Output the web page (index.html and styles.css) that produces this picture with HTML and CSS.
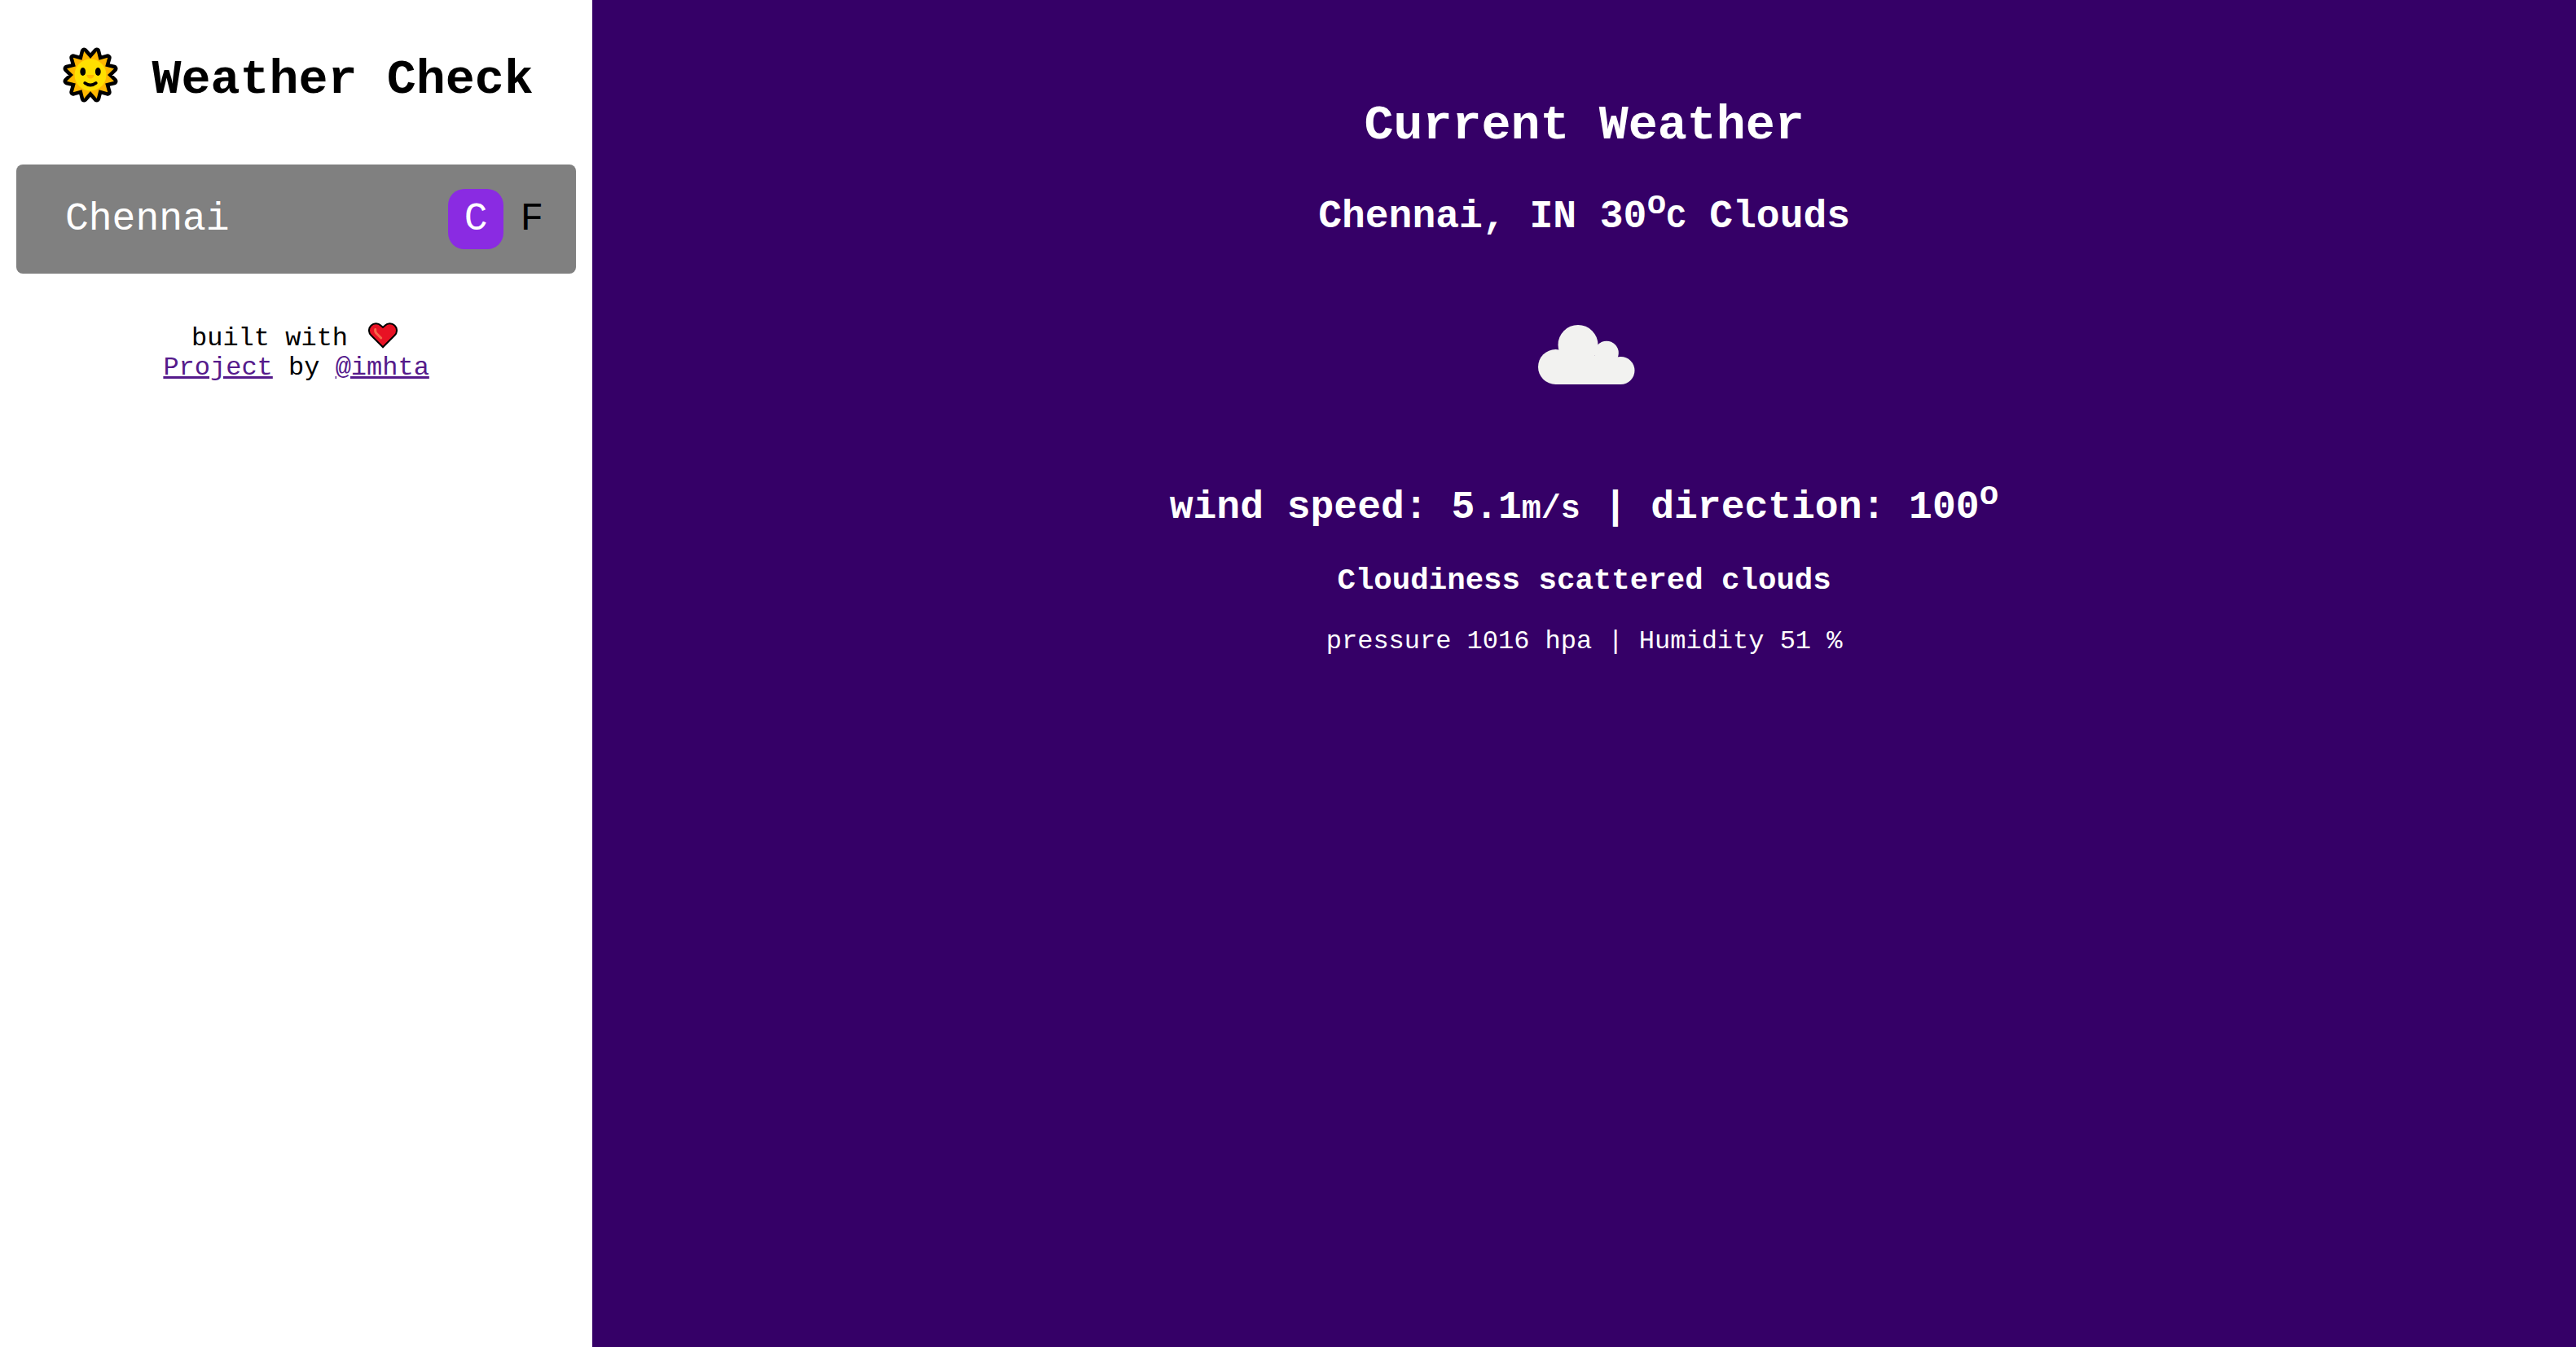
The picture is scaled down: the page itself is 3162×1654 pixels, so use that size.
FILE: index.html
```html
<!DOCTYPE html>
<html lang="en">
<head>
<meta charset="utf-8">
<title>Weather Check</title>
<link rel="stylesheet" href="styles.css">
</head>
<body>
<div class="app">
  <aside class="sidebar">
    <h1 class="brand">
      <svg class="sun" viewBox="0 0 72 72" aria-hidden="true">
        <path class="sun-rays" d="M38 16 L45.800 7 L48.500 17.800 L59.200 14.800 L56.200 25.500 L67 28.200 L59 36 L67 43.800 L56.200 46.500 L59.200 57.200 L48.500 54.200 L45.800 65 L38 56 L30.200 65 L27.500 54.200 L16.800 57.200 L19.800 46.500 L9 43.800 L17 36 L9 28.200 L19.800 25.500 L16.800 14.800 L27.500 17.800 L30.200 7 Z"/>
        <circle cx="38" cy="36" r="19.500" fill="#ffe000"/>
        <ellipse cx="28.700" cy="32" rx="3.400" ry="5"/>
        <ellipse cx="47.300" cy="32" rx="3.400" ry="5"/>
        <path d="M33.300 36h9.400q-1 4.500-4.700 4.500t-4.700-4.500Z" fill="#ffb700"/>
        <path class="smile" d="M31.300 46Q38 51 44.700 46"/>
      </svg>
      Weather Check
    </h1>
    <form class="search">
      <input class="city" type="text" value="Chennai" aria-label="City">
      <button class="unit unit-active" type="button">C</button>
      <button class="unit" type="button">F</button>
    </form>
    <footer class="credits">
      <div>built with
        <svg class="heart" viewBox="0 0 36 32" role="img" aria-label="love">
          <path class="heart-shape" d="M18 30.300 L3.500 15.800 A8.500 8.500 0 0 1 3.500 3.700 A8.500 8.500 0 0 1 15.500 3.700 L18 6 L20.500 3.700 A8.500 8.500 0 0 1 32.500 3.700 A8.500 8.500 0 0 1 32.500 15.800 Z"/>
          <path class="heart-shine" d="M8.700 8.500 Q8.200 11.500 10.200 13.500 L15.700 19"/>
        </svg>
      </div>
      <div><a href="#project">Project</a> by <a href="#imhta">@imhta</a></div>
    </footer>
  </aside>
  <main class="weather">
    <h1 class="title">Current Weather</h1>
    <h2 class="place">Chennai, IN 30<sup>o</sup><small>C</small> Clouds</h2>
    <svg class="cloud" viewBox="0 0 124 78" role="img" aria-label="Clouds">
      <circle cx="26.500" cy="53.500" r="21.500"/>
      <circle cx="54" cy="26.500" r="24.500"/>
      <circle cx="89" cy="36.500" r="14.800"/>
      <circle cx="106.500" cy="58" r="17"/>
      <path d="M26 40H100L107 75H26Z"/>
    </svg>
    <h2 class="wind">wind speed: 5.1<small>m/s</small> | direction: 100<sup>o</sup></h2>
    <h3 class="cloudiness">Cloudiness scattered clouds</h3>
    <p class="details">pressure 1016 hpa | Humidity 51 %</p>
  </main>
</div>
</body>
</html>
```
FILE: styles.css
```css
* {
  box-sizing: border-box;
}

body {
  margin: 0;
  font-family: "Courier New", "Liberation Mono", monospace;
  font-size: 32px;
  line-height: 36px;
  color: #000;
  background: #fff;
}

.app {
  display: grid;
  grid-template-columns: minmax(0, 23fr) minmax(0, 77fr);
  min-height: 100vh;
}

.sidebar {
  padding: 56px 20px;
}

.brand {
  display: flex;
  align-items: flex-start;
  justify-content: center;
  gap: 42px;
  margin: 0 0 62px;
  font-size: 60px;
  line-height: 84px;
  white-space: nowrap;
}

.sun {
  flex: none;
  width: 72px;
  height: 72px;
}

.sun-rays {
  fill: #ffb700;
  stroke: #000;
  stroke-width: 9;
  stroke-linejoin: round;
  paint-order: stroke;
}

.smile {
  fill: none;
  stroke: #000;
  stroke-width: 4;
  stroke-linecap: round;
}

.search {
  display: flex;
  align-items: center;
  padding: 30px 20px;
  border-radius: 8px;
  background: #808080;
}

.city,
.unit {
  border: 0;
  background: none;
  font: inherit;
  font-size: 48px;
  line-height: 54px;
}

.city {
  flex: 1;
  min-width: 0;
  padding: 10px 40px;
  color: #fff;
}

.unit {
  padding: 10px 20px;
  border-radius: 20px;
  color: #000;
}

.unit-active {
  background: #8a2be2;
  color: #fff;
}

.credits {
  margin-top: 60px;
  text-align: center;
}

.credits a {
  color: #551a8b;
}

.heart {
  width: 36px;
  height: 32px;
  margin: 0 4px 0 6px;
  vertical-align: -4px;
}

.heart-shape {
  fill: #e81224;
  stroke: #000;
  stroke-width: 2;
}

.heart-shine {
  fill: none;
  stroke: #f4694a;
  stroke-width: 3;
  stroke-linecap: round;
}

.weather {
  display: flex;
  flex-direction: column;
  align-items: center;
  padding: 120px 40px;
  color: #fff;
  background: #350067;
}

.weather sup {
  line-height: 0;
}

.title {
  margin: 0 0 48px;
  font-size: 60px;
  line-height: 68px;
}

.place,
.wind {
  margin: 0;
  line-height: 60px;
}

.cloud {
  width: 124px;
  height: 78px;
  margin: 98px 0 118px;
  fill: #f2f2f0;
}

.cloudiness {
  margin: 36px 0;
  line-height: 42px;
}

.details {
  margin: 0;
}
```
